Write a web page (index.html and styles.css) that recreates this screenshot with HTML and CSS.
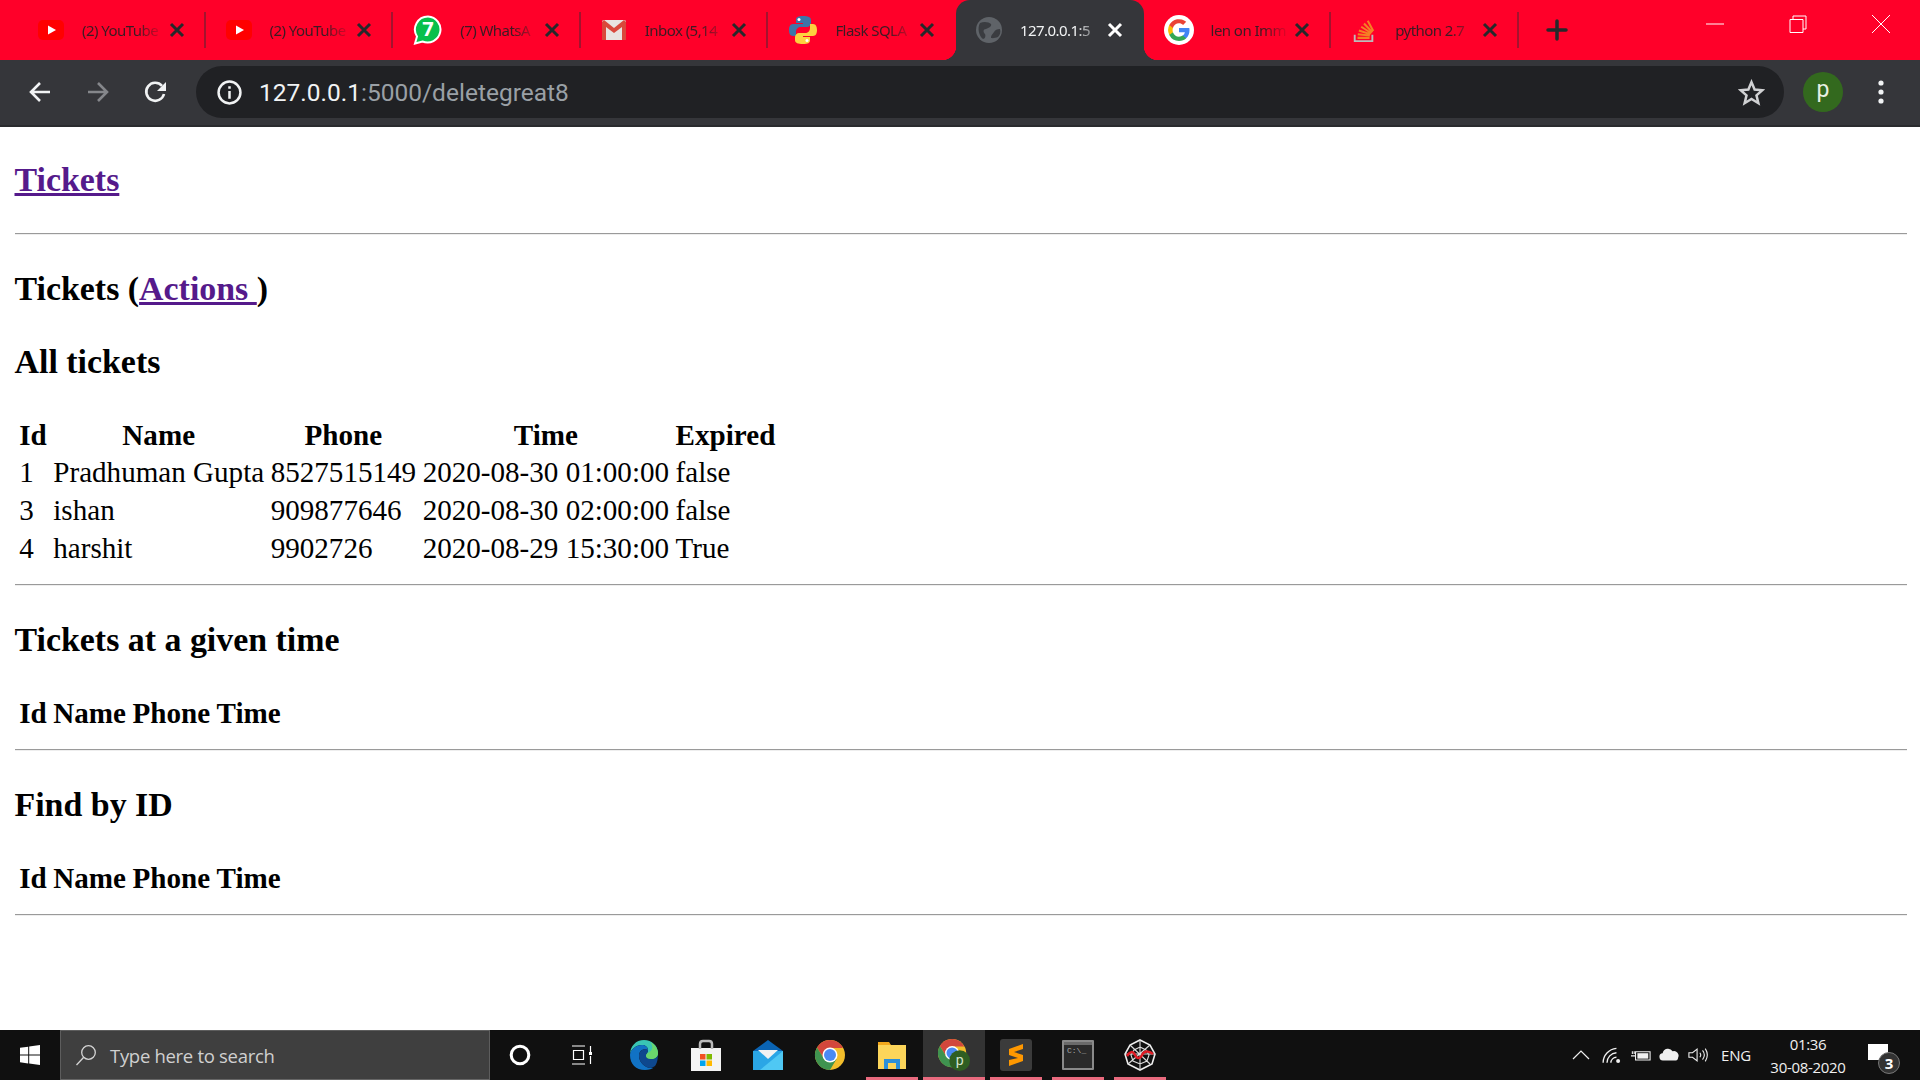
FILE: index.html
```html
<!DOCTYPE html>
<html lang="en">
<head>
<meta charset="utf-8">
<title>Tickets</title>
<link rel="stylesheet" href="styles.css">
</head>
<body>
<header class="chrome">
  <div class="tabstrip">
    <div class="tab sep"><svg class="fav" viewBox="0 0 26 26"><rect y="3" width="26" height="20" rx="5" fill="#f00"/><path d="M10 8.500l8 4.500-8 4.500z" fill="#fff"/></svg><span class="title">(2) YouTube</span><svg class="close" viewBox="0 0 16 16"><path d="M2 2l12 12M14 2L2 14"/></svg></div>
    <div class="tab sep"><svg class="fav" viewBox="0 0 26 26"><rect y="3" width="26" height="20" rx="5" fill="#f00"/><path d="M10 8.500l8 4.500-8 4.500z" fill="#fff"/></svg><span class="title">(2) YouTube</span><svg class="close" viewBox="0 0 16 16"><path d="M2 2l12 12M14 2L2 14"/></svg></div>
    <div class="tab sep"><svg class="fav fav-lg" viewBox="0 0 30 30"><path d="M15 1.500a13 13 0 0 0-11 20L2 28.500l7.500-2A13 13 0 1 0 15 1.500z" fill="#09c04c" stroke="#fff" stroke-width="2"/><text x="15" y="21" class="wa">7</text></svg><span class="title">(7) WhatsA</span><svg class="close" viewBox="0 0 16 16"><path d="M2 2l12 12M14 2L2 14"/></svg></div>
    <div class="tab sep"><svg class="fav" viewBox="0 0 26 26"><rect x="1" y="3" width="24" height="20" rx="2" fill="#e8e4e0"/><path d="M1 5v18h4V10l8 6 8-6v13h4V5l-2-2-10 8L3 3z" fill="#d9483b"/></svg><span class="title">Inbox (5,14</span><svg class="close" viewBox="0 0 16 16"><path d="M2 2l12 12M14 2L2 14"/></svg></div>
    <div class="tab"><svg class="fav fav-lg" viewBox="0 0 28 30"><path d="M14 1c-5 0-7 1-7 4v3h7v1H4c-3 0-4 3-4 6s1 6 4 6h3v-4c0-3 2-5 5-5h6c2 0 4-2 4-4V5c0-3-3-4-8-4z" fill="#3d75a8"/><path d="M14 29c5 0 7-1 7-4v-3h-7v-1h10c3 0 4-3 4-6s-1-6-4-6h-3v4c0 3-2 5-5 5h-6c-2 0-4 2-4 4v3c0 3 3 4 8 4z" fill="#fdd23f"/><circle cx="10" cy="4.500" r="1.500" fill="#fff"/><circle cx="18" cy="25.500" r="1.500" fill="#fff"/></svg><span class="title">Flask SQLA</span><svg class="close" viewBox="0 0 16 16"><path d="M2 2l12 12M14 2L2 14"/></svg></div>
    <div class="tab active"><svg class="fav" viewBox="0 0 26 26"><circle cx="13" cy="13" r="13" fill="#5f6368"/><path d="M4 6c4-2 9-1 11 1 1 2-2 4-5 5-3 0-3 3-1 5 1 2 0 5-2 5C3 19 1 11 4 6zM22 20c-3 1-7 2-7 0 0-2 2-3 3-5 1-2 3-3 6-3 1 3 0 6-2 8z" fill="#3a3c40"/></svg><span class="title">127.0.0.1:5</span><svg class="close" viewBox="0 0 16 16"><path d="M2 2l12 12M14 2L2 14"/></svg></div>
    <div class="tab sep"><svg class="fav fav-lg" viewBox="0 0 30 30"><circle cx="15" cy="15" r="15" fill="#fff"/><path d="M25.500 15.200c0-.8-.1-1.600-.2-2.300H15v4.400h5.900a5 5 0 0 1-2.200 3.300v2.700h3.500c2.100-1.900 3.300-4.800 3.300-8.100z" fill="#4285f4"/><path d="M15 26c3 0 5.400-1 7.200-2.700L18.700 20.600c-1 .7-2.200 1.100-3.700 1.100-2.800 0-5.200-1.900-6.100-4.500H5.300v2.800A11 11 0 0 0 15 26z" fill="#34a853"/><path d="M8.900 17.200a6.600 6.600 0 0 1 0-4.300V10H5.300a11 11 0 0 0 0 9.900z" fill="#fbbc05"/><path d="M15 8.300c1.600 0 3 .5 4.100 1.600l3.100-3.100A11 11 0 0 0 5.300 10l3.600 2.900C9.800 10.200 12.200 8.300 15 8.300z" fill="#ea4335"/></svg><span class="title">len on Imm</span><svg class="close" viewBox="0 0 16 16"><path d="M2 2l12 12M14 2L2 14"/></svg></div>
    <div class="tab sep"><svg class="fav" viewBox="0 0 26 28"><path d="M3 19v7h19v-7" fill="none" stroke="#bcbbbb" stroke-width="2"/><path d="M6 22.500h13M6.300 18.500l13 1.500M7.500 14.500l12.500 4M10 10.500l11 7M13 7l9 9.500M17 4l6 11" fill="none" stroke="#f48024" stroke-width="2.200"/></svg><span class="title">python 2.7</span><svg class="close" viewBox="0 0 16 16"><path d="M2 2l12 12M14 2L2 14"/></svg></div>
    <svg class="newtab" viewBox="0 0 22 22"><path d="M11 2v18M2 11h18"/></svg>
    <div class="winctl">
      <svg class="ctl" viewBox="0 0 18 18"><path d="M0 9h18"/></svg>
      <svg class="ctl" viewBox="0 0 18 18"><path d="M1 4.500h13v13H1zM4 4.500V1h13v13h-3"/></svg>
      <svg class="ctl" viewBox="0 0 18 18"><path d="M0 0l18 18M18 0L0 18"/></svg>
    </div>
  </div>
  <div class="toolbar">
    <svg class="nav" viewBox="0 0 24 24"><path d="M22 12H3M12 3l-9 9 9 9"/></svg>
    <svg class="nav dim" viewBox="0 0 24 24"><path d="M2 12h19M12 3l9 9-9 9"/></svg>
    <svg class="nav" viewBox="0 0 24 24"><path d="M20 14a9 9 0 1 1-2-8.200"/><path class="solid" d="M22 2v9h-9z"/></svg>
    <div class="omnibox">
      <svg class="info" viewBox="0 0 24 24"><circle cx="12" cy="12" r="10.500"/><path d="M12 10.500V18M12 6v2.500"/></svg>
      <span class="url">127.0.0.1<span class="url-rest">:5000/deletegreat8</span></span>
      <svg class="star" viewBox="0 0 26 26"><path d="M13 3l3 7.200 7.500.6-5.700 5 1.800 7.500L13 19.300l-6.600 4 1.800-7.500-5.700-5 7.500-.6z"/></svg>
    </div>
    <div class="avatar">p</div>
    <svg class="dots" viewBox="0 0 6 26"><circle cx="3" cy="4" r="2.600"/><circle cx="3" cy="13" r="2.600"/><circle cx="3" cy="22" r="2.600"/></svg>
  </div>
</header>

<main class="page">
  <h3><a href="#">Tickets</a></h3>
  <hr>
  <h3>Tickets (<a href="#">Actions </a>)</h3>
  <h3>All tickets</h3>
  <table>
    <tr><th>Id</th><th>Name</th><th>Phone</th><th>Time</th><th>Expired</th></tr>
    <tr><td>1</td><td>Pradhuman Gupta</td><td>8527515149</td><td>2020-08-30 01:00:00</td><td>false</td></tr>
    <tr><td>3</td><td>ishan</td><td>909877646</td><td>2020-08-30 02:00:00</td><td>false</td></tr>
    <tr><td>4</td><td>harshit</td><td>9902726</td><td>2020-08-29 15:30:00</td><td>True</td></tr>
  </table>
  <hr>
  <h3>Tickets at a given time</h3>
  <table>
    <tr><th>Id</th><th>Name</th><th>Phone</th><th>Time</th></tr>
  </table>
  <hr>
  <h3>Find by ID</h3>
  <table>
    <tr><th>Id</th><th>Name</th><th>Phone</th><th>Time</th></tr>
  </table>
  <hr>
</main>

<footer class="taskbar">
  <svg class="start" viewBox="0 0 20 20"><path d="M0 2.800l8.200-1.100v7.900H0zM9.200 1.500L20 0v9.600H9.200zM0 10.500h8.200v7.900L0 17.200zM9.200 10.500H20V20L9.200 18.500z"/></svg>
  <div class="search"><svg class="lens" viewBox="0 0 22 22"><circle cx="13.500" cy="8.500" r="6.800"/><path d="M8.500 13.500L1.500 21"/></svg><span>Type here to search</span></div>
  <div class="tb-apps">
    <div class="tb-item"><svg class="cortana" viewBox="0 0 20 20"><circle cx="10" cy="10" r="8"/></svg></div>
    <div class="tb-item"><svg class="taskview" viewBox="0 0 22 20"><path d="M1 1h13M1 19h13M2.500 5.500h10v9h-10zM19.500 1v6M19.500 11v8"/><rect x="18" y="7" width="3" height="3" class="solid"/></svg></div>
    <div class="tb-item"><svg class="app" viewBox="0 0 32 32"><path d="M2 16C2 7 8 1 16 1c8 0 14 6 14 13 0 4-3 6-7 6-3 0-5-1-5-3 0-3 2-3 2-6 0-3-3-5-6-5-6 0-12 5-12 10z" fill="#39c5b4"/><path d="M2 16c0-5 6-10 12-10 3 0 6 2 6 5-4-2-9 0-9 6 0 6 6 12 12 12 2 0 3 0 4-1-3 2-6 3-10 3C8 31 2 25 2 16z" fill="#1172c4"/><path d="M11 17c0-6 5-8 9-6 0 3-2 3-2 6 0 2 2 3 5 3 4 0 7-2 7-5 0 0 0 9-3 12-2 1-3 2-4 2-6 0-12-6-12-12z" fill="#0e4f9c" opacity=".9"/><path d="M18 17c0 2 2 3 5 3 4 0 7-2 7-6 0-4-3-9-8-11 2 2 3 5 2 7-1 3-6 4-6 7z" fill="#6ad66c"/></svg></div>
    <div class="tb-item"><svg class="app" viewBox="0 0 30 32"><rect x="0" y="9" width="30" height="23" fill="#f3f3f3"/><path d="M9 10V5c0-2 1-3 3-3h6c2 0 3 1 3 3v5" fill="none" stroke="#bbb" stroke-width="2.500"/><rect x="9" y="15" width="5.500" height="5.500" fill="#f25022"/><rect x="15.500" y="15" width="5.500" height="5.500" fill="#7fba00"/><rect x="9" y="21.500" width="5.500" height="5.500" fill="#00a4ef"/><rect x="15.500" y="21.500" width="5.500" height="5.500" fill="#ffb900"/></svg></div>
    <div class="tb-item"><svg class="app" viewBox="0 0 32 32"><path d="M1 12L16 1l15 11z" fill="#0a64b4"/><path d="M1 12h30v19H1z" fill="#2aa6e6"/><path d="M6 11h20l-10 9z" fill="#f2f2f2"/><path d="M31 12v19H8z" fill="#4fc8f4"/></svg></div>
    <div class="tb-item"><svg class="app" viewBox="0 0 32 32"><circle cx="16" cy="16" r="15" fill="#f2bd2b"/><path d="M16 1a15 15 0 0 0-13 7.500L9.500 19 16 9h13A15 15 0 0 0 16 1z" fill="#d2473c"/><path d="M3 8.500A15 15 0 0 0 16 31l6.500-11-13-1z" fill="#3f9350"/><circle cx="16" cy="16" r="7.500" fill="#fff"/><circle cx="16" cy="16" r="6" fill="#4a8af4"/></svg></div>
    <div class="tb-item"><svg class="app" viewBox="0 0 32 32"><path d="M2 3h11l2 3H2z" fill="#f2a81d"/><path d="M2 6h28v24H2z" fill="#fcd55a"/><path d="M8 30V20h16v10h-4v-6h-8v6z" fill="#2b8fd8"/></svg></div>
    <div class="tb-item tb-current"><svg class="app" viewBox="0 0 34 34"><circle cx="15" cy="15" r="15" fill="#f2bd2b"/><path d="M15 0a15 15 0 0 0-13 7.500L8.500 18 15 8h13A15 15 0 0 0 15 0z" fill="#d2473c"/><path d="M2 7.500A15 15 0 0 0 15 30l6.500-11-13-1z" fill="#3f9350"/><circle cx="15" cy="15" r="7.500" fill="#fff"/><circle cx="15" cy="15" r="6" fill="#4a8af4"/><circle cx="23" cy="23" r="11" fill="#2f5e22"/><text x="23" y="28" class="tb-p">p</text></svg></div>
    <div class="tb-item"><svg class="app" viewBox="0 0 32 32"><rect width="32" height="32" rx="3" fill="#3b3b3b"/><path d="M23 5L9 10v6l9 3-9 2v3l0 3 14-5v-6l-9-3 9-3z" fill="#ff9800"/></svg></div>
    <div class="tb-item"><svg class="app" viewBox="0 0 32 30"><rect width="32" height="30" rx="1" fill="#8a8a8a"/><rect x="2" y="2" width="28" height="26" fill="#2a2a2a"/><rect x="2" y="2" width="28" height="3" fill="#6a6a6a"/><text x="5" y="13" class="cmd-t">C:\_</text></svg></div>
    <div class="tb-item"><svg class="app" viewBox="0 0 32 32"><path d="M16 1l10 5 5 9-3 10-12 6-12-6-3-10 5-9z" fill="none" stroke="#eee" stroke-width="1.600"/><path d="M16 8l6 3 3 5-2 6-7 3-7-3-2-6 3-5zM16 1v30M1 15h30M6 6l20 19M26 6L4 25" fill="none" stroke="#ddd" stroke-width="1.100"/><path d="M3 17c3-5 6-5 8-1s5 4 7 0 6-5 11-1" fill="none" stroke="#e01b24" stroke-width="2.500"/></svg></div>
  </div>
  <div class="tray">
    <svg class="tray-ic chev" viewBox="0 0 18 10"><path d="M1 9l8-8 8 8"/></svg>
    <svg class="tray-ic" viewBox="0 0 18 16"><path d="M1 15A13 13 0 0 1 13 2M4.500 15A9 9 0 0 1 13 6M8 15a5 5 0 0 1 5-5"/><circle cx="14.500" cy="13.500" r="1.800" class="solid"/></svg>
    <svg class="tray-ic" viewBox="0 0 22 14"><path d="M5 3.500h16v9H5z"/><rect x="7" y="5" width="12" height="6" class="solid"/><path d="M0 8h5M1.500 3v3M3.500 3v3"/></svg>
    <svg class="tray-ic" viewBox="0 0 22 14"><path class="solid" d="M5 13a4 4 0 0 1-1-8 6 6 0 0 1 11-2 5 5 0 0 1 6 7 3 3 0 0 1-2 3z"/></svg>
    <svg class="tray-ic" viewBox="0 0 22 16"><path d="M1 5.500h4L10 1.500v13l-5-4H1zM13 5.500a4 4 0 0 1 0 5M16 3a8 8 0 0 1 0 10M19 1a13 13 0 0 1 0 14"/></svg>
    <span class="lang">ENG</span>
    <div class="clock"><span>01:36</span><span>30-08-2020</span></div>
    <div class="notif"><svg class="notif-ic" viewBox="0 0 20 18"><path d="M0 0h20v16H0z"/></svg><span class="badge">3</span></div>
  </div>
</footer>
</body>
</html>
```
FILE: styles.css
```css
html, body { margin: 0; padding: 0; height: 100%; }
body { display: flex; flex-direction: column; height: 100vh; overflow: hidden; background: #fff; font-family: "Liberation Serif", serif; }

.chrome { flex: none; background: #35363a; }
.tabstrip { height: 60px; background: #ff0029; display: flex; align-items: center; padding-left: 18px; position: relative; }
.tab { flex: none; width: 187.6px; height: 60px; box-sizing: border-box; padding: 0 21px 0 20px; display: flex; align-items: center; position: relative; }
.tab.sep::after { content: ""; position: absolute; right: 0; top: 12px; height: 36px; width: 2px; background: #a3132e; }
.fav { flex: none; width: 26px; height: 26px; margin-right: 18px; }
.fav-lg { width: 30px; height: 30px; margin: 0 17px 0 0; }
.title { flex: 1; min-width: 0; font: 15px "Noto Sans", sans-serif; letter-spacing: -.55px; color: #3b1b24; white-space: nowrap; overflow: hidden; -webkit-mask-image: linear-gradient(90deg, #000 70%, rgba(0,0,0,.15)); mask-image: linear-gradient(90deg, #000 70%, rgba(0,0,0,.15)); }
.close { flex: none; width: 16px; height: 16px; margin-left: 8px; fill: none; stroke: #26282b; stroke-width: 3; }
.tab.active { background: #35363a; border-radius: 14px 14px 0 0; }
.tab.active::before, .tab.active::after { content: ""; position: absolute; bottom: 0; width: 14px; height: 14px; }
.tab.active::before { left: -14px; background: radial-gradient(circle at 0 0, #ff0029 14px, #35363a 14.5px); }
.tab.active::after { right: -14px; background: radial-gradient(circle at 100% 0, #ff0029 14px, #35363a 14.5px); }
.tab.active .title { color: #f1f3f4; }
.tab.active .close { stroke: #fff; }
.newtab { flex: none; width: 22px; height: 22px; margin-left: 27.5px; fill: none; stroke: #26282b; stroke-width: 3.5; stroke-linecap: round; }
.winctl { margin-left: auto; display: flex; gap: 65px; padding: 0 30px 12px 0; }
.ctl { width: 18px; height: 18px; fill: none; stroke: #fff; stroke-width: 1; }

.toolbar { height: 67px; display: flex; align-items: center; padding: 0 0 1px 28px; border-bottom: 2px solid #2a2b2e; box-sizing: border-box; }
.nav { flex: none; width: 24px; height: 24px; margin-right: 34px; fill: none; stroke: #f1f3f4; stroke-width: 2.6; }
.nav.dim { stroke: #85878b; }
.nav .solid { fill: #f1f3f4; stroke: none; }
.omnibox { flex: none; width: 1588px; height: 52px; margin-left: -6px; background: #202124; border-radius: 26px; display: flex; align-items: center; padding: 0 19.5px 0 21px; box-sizing: border-box; }
.info { flex: none; width: 25px; height: 25px; fill: none; stroke: #f1f3f4; stroke-width: 2.4; }
.url { margin-left: 17px; font: 24.5px Roboto, sans-serif; color: #f1f3f4; }
.url-rest { color: #9aa0a6; }
.star { flex: none; width: 27px; height: 27px; margin-left: auto; fill: none; stroke: #d0d1d3; stroke-width: 2.4; }
.avatar { flex: none; width: 40px; height: 40px; margin-left: 19px; border-radius: 50%; background: #33691e; color: #e8f0e4; font: 23px/36px Roboto, sans-serif; text-align: center; }
.dots { flex: none; width: 6px; height: 26px; margin-left: 35px; fill: #f1f3f4; }

.page { flex: 1; min-height: 0; padding: 0 13px 0 14.5px; overflow: hidden; }
h3 { font-size: 33.9px; font-weight: bold; margin: 34px 0; line-height: 39px; color: #000; }
h3:first-child { margin-top: 33px; }
a { color: #551a8b; text-decoration: underline; }
hr { border: 0; border-top: 1px solid #9a9a9a; border-bottom: 1px solid #eee; margin: 15.5px 0; }
table { border-collapse: separate; border-spacing: 3.7px; font-size: 29.1px; }
td, th { padding: 1.75px; line-height: 31.1px; }
th { font-weight: bold; text-align: center; }
td { text-align: left; }

.taskbar { flex: none; height: 50px; background: #101010; display: flex; align-items: stretch; }
.start { flex: none; width: 20px; height: 20px; margin: 15px 20px 0 20px; fill: #fff; }
.search { flex: none; width: 430px; background: #3f3f3f; border: 1px solid #5d5d5d; border-bottom-color: #666; box-sizing: border-box; display: flex; align-items: center; padding-left: 14px; color: #d0d0d0; font: 18.5px "Open Sans", sans-serif; letter-spacing: -.3px; }
.lens { flex: none; width: 22px; height: 22px; margin-right: 13px; fill: none; stroke: #d5d5d5; stroke-width: 1.3; }
.tb-apps { display: flex; margin-left: -1.3px; }
.tb-item { flex: none; width: 62px; display: flex; align-items: center; justify-content: center; position: relative; }
.tb-item:nth-child(n+7)::after { content: ""; position: absolute; bottom: 0; left: 5px; right: 5px; height: 3px; background: #e96a7e; }
.tb-current { background: #333; }
.tb-current::after { left: 0 !important; right: 0 !important; }
.cortana { width: 22px; height: 22px; fill: none; stroke: #fff; stroke-width: 2.8; }
.taskview { width: 22px; height: 22px; fill: none; stroke: #fff; stroke-width: 1.2; }
.taskview .solid { fill: #fff; stroke: none; }
.app { width: 32px; height: 32px; }
.wa { font: bold 20px "Noto Sans", sans-serif; fill: #fff; text-anchor: middle; }
.tb-p { font: 15px Roboto, sans-serif; fill: #d5e3cf; text-anchor: middle; }
.cmd-t { font: 8px "Liberation Mono", monospace; fill: #aaa; }
.tray { margin-left: auto; display: flex; align-items: center; color: #f0f0f0; font: 15px "Open Sans", sans-serif; padding-right: 4px; }
.tray-ic { flex: none; width: 20px; height: 18px; margin-right: 8.5px; fill: none; stroke: #f0f0f0; stroke-width: 1.2; }
.tray-ic .solid { fill: #f0f0f0; stroke: none; }
.chev { width: 18px; height: 10px; margin-right: 12px; }
.lang { margin-left: 5px; letter-spacing: -.2px; }
.clock { margin-left: 15px; width: 84px; display: flex; flex-direction: column; align-items: center; gap: 5px; line-height: 18px; letter-spacing: -.3px; }
.notif { position: relative; width: 30px; height: 34px; margin-left: 16px; margin-right: 20px; }
.notif-ic { width: 20px; height: 18px; position: absolute; left: 2px; top: 6px; fill: #fff; }
.badge { position: absolute; left: 12px; top: 14px; width: 20px; height: 20px; border-radius: 50%; background: #333; border: 1px solid #777; font: bold 15px/20px "Open Sans", sans-serif; text-align: center; color: #fff; }
```
